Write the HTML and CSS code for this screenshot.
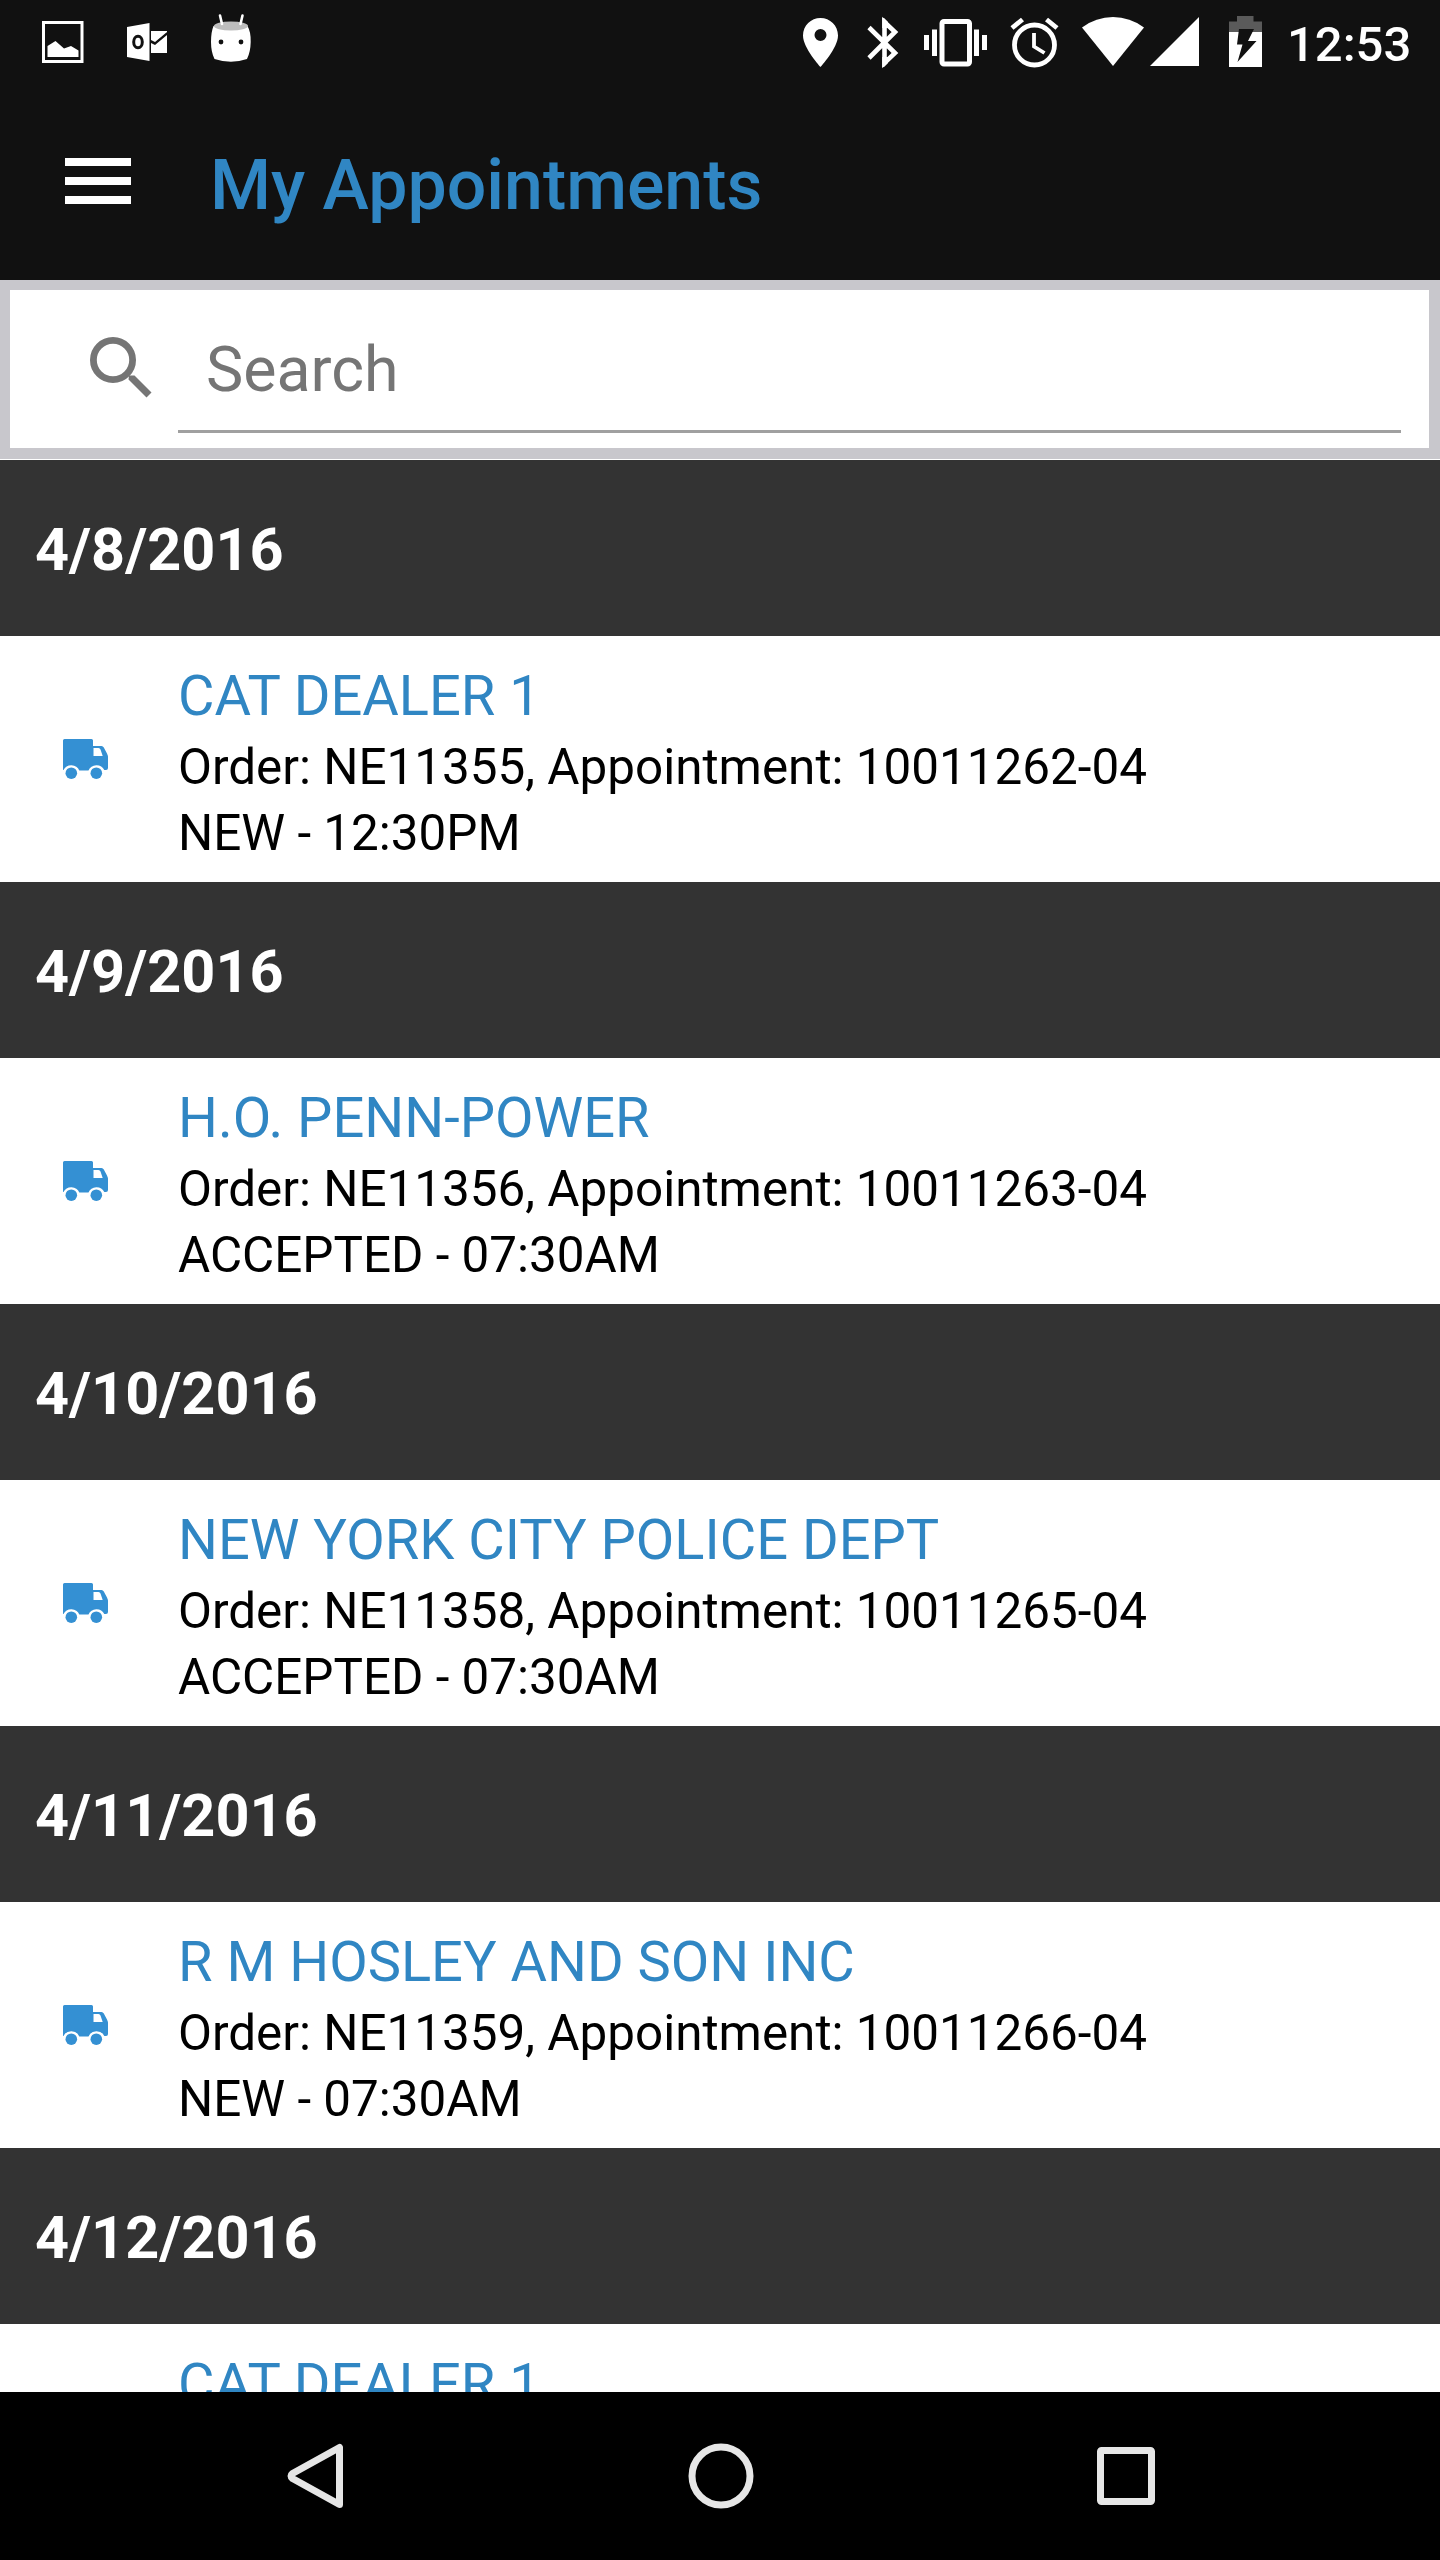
FILE: index.html
```
<!DOCTYPE html>
<html>

<head>
    <meta charset="utf-8">
    <title>My Appointments</title>
    <link rel="stylesheet" href="styles.css">
</head>

<body>
    <svg class="hidden">
        <symbol id="truck" viewBox="0 0 45 40">
            <path fill-rule="evenodd" d="M1.5 0H28.5Q30 0 30 1.500V7H38.500Q40 7 40.800 8.500L44 14.500Q45 16.500 45 18.500V29Q45 31 43 31H41.300A8.700 8.700 0 0 0 25.500 31.500H16.300A8.700 8.700 0 0 0 0.500 31L0 31V1.500Q0 0 1.500 0ZM30.500 9V17H39.700L37.500 10.500Q37 9 35.500 9Z"/>
            <circle cx="8.300" cy="34.200" r="5.800"/>
            <circle cx="33.300" cy="34.200" r="5.800"/>
        </symbol>
    </svg>

    <div class="screen">
        <div class="statusBar">
            <div class="notifications">
                <svg width="42" height="88" viewBox="42 0 42 88">
                    <rect x="43.500" y="22.500" width="38.500" height="39" fill="none" stroke="#fff" stroke-width="3"/>
                    <path d="M47.500 46L55.500 41L64 48.500L71 46L78.500 50.500V57H47.500Z"/>
                </svg>
                <svg width="42" height="88" viewBox="126 0 42 88">
                    <path d="M127 27L149.500 23V61L127 57Z"/>
                    <path d="M151 31H167V53H151V43L155 45L167 35V32L155 42L151 40Z"/>
                    <ellipse cx="138" cy="42" rx="4.300" ry="5.800" fill="none" stroke="#111" stroke-width="3"/>
                </svg>
                <svg width="42" height="88" viewBox="210 0 42 88">
                    <path d="M213.500 26Q231 20 247.500 26Q251 32 250.700 42Q250.500 52 247 59Q231 64.500 214.500 59Q211 52 211 42Q211 32 213.500 26Z"/>
                    <ellipse cx="231" cy="26" rx="17" ry="4.500" fill="#bdbdbd"/>
                    <path d="M220 15.500L222 24M242.500 15.500L240.500 24" stroke="#fff" stroke-width="2.600" stroke-linecap="round"/>
                    <circle cx="221" cy="42" r="2.400" fill="#111"/>
                    <circle cx="241" cy="42" r="2.400" fill="#111"/>
                </svg>
            </div>
            <div class="systemIcons">
                <svg width="36" height="88" viewBox="803 0 36 88">
                    <path fill-rule="evenodd" d="M820.500 18C811 18 803 25.500 803 35.500C803 48 820.500 67 820.500 67S838 48 838 35.500C838 25.500 830 18 820.500 18ZM820.500 29A6 6 0 1 1 820.500 41A6 6 0 0 1 820.500 29Z"/>
                </svg>
                <svg class="bluetooth" width="32" height="88" viewBox="867 0 32 88">
                    <path fill="none" stroke="#fff" stroke-width="4.600" d="M869 27.500L895 53L884.500 63V22L895 32L869 58"/>
                    <path d="M882.200 18H884L888 22V28H882.200ZM882.200 67H884L888 63V57H882.200Z"/>
                </svg>
                <svg class="vibrate" width="64" height="88" viewBox="924 0 64 88">
                    <rect x="942" y="21.500" width="27.500" height="42.500" rx="2" fill="none" stroke="#fff" stroke-width="5"/>
                    <path d="M924 35H929V50H924ZM932 29.500H937V56H932ZM974 29.500H979V56H974ZM982 35H987V50H982Z"/>
                </svg>
                <svg class="alarm" width="49" height="88" viewBox="1010 0 49 88">
                    <g fill="none" stroke="#fff">
                        <circle cx="1034.500" cy="45" r="20" stroke-width="4.800"/>
                        <path d="M1012 28L1022.500 19.500M1046.500 19.500L1057 28" stroke-width="4.800"/>
                        <path d="M1034 33V46.500L1044.500 53" stroke-width="3.800"/>
                    </g>
                </svg>
                <svg class="wifi" width="62" height="88" viewBox="1082 0 62 88">
                    <path d="M1113 66L1082 27.500Q1096 17 1113 17T1144 27.500Z"/>
                </svg>
                <svg class="signal" width="49" height="88" viewBox="1150 0 49 88">
                    <path d="M1150 66L1199 17V66Z"/>
                </svg>
                <svg class="battery" width="33" height="88" viewBox="1229 0 33 88">
                    <path fill="#5a5a5a" d="M1229 21.500H1237V16H1253.500V21.500H1262V32H1229Z"/>
                    <path d="M1229 32H1262V67H1229Z"/>
                    <path fill="#111" d="M1239 29H1254L1248 41H1256.500L1237.500 62L1242.500 44.500H1237Z"/>
                </svg>
                <span class="clock">12:53</span>
            </div>
        </div>

        <div class="header">
            <div class="menuButton">
                <span></span>
                <span></span>
                <span></span>
            </div>
            <div class="title">My Appointments</div>
        </div>

        <div class="searchBar">
            <svg class="searchIcon" width="62" height="62" viewBox="0 0 62 62">
                <circle cx="23" cy="23" r="19.600" fill="none" stroke="#757575" stroke-width="6.800"/>
                <path d="M39 38.500H44.500L61.500 55.500L56.500 60.500L38.500 42.500Z" fill="#757575"/>
            </svg>
            <div class="searchField">Search</div>
        </div>

        <div class="list">
            <div class="date">4/8/2016</div>
            <div class="appointment">
                <svg class="truck"><use href="#truck"/></svg>
                <div class="details">
                    <div class="name">CAT DEALER 1</div>
                    <div class="info">Order: NE11355, Appointment: 10011262-04</div>
                    <div class="info">NEW - 12:30PM</div>
                </div>
            </div>

            <div class="date">4/9/2016</div>
            <div class="appointment">
                <svg class="truck"><use href="#truck"/></svg>
                <div class="details">
                    <div class="name">H.O. PENN-POWER</div>
                    <div class="info">Order: NE11356, Appointment: 10011263-04</div>
                    <div class="info">ACCEPTED - 07:30AM</div>
                </div>
            </div>

            <div class="date">4/10/2016</div>
            <div class="appointment">
                <svg class="truck"><use href="#truck"/></svg>
                <div class="details">
                    <div class="name">NEW YORK CITY POLICE DEPT</div>
                    <div class="info">Order: NE11358, Appointment: 10011265-04</div>
                    <div class="info">ACCEPTED - 07:30AM</div>
                </div>
            </div>

            <div class="date">4/11/2016</div>
            <div class="appointment">
                <svg class="truck"><use href="#truck"/></svg>
                <div class="details">
                    <div class="name">R M HOSLEY AND SON INC</div>
                    <div class="info">Order: NE11359, Appointment: 10011266-04</div>
                    <div class="info">NEW - 07:30AM</div>
                </div>
            </div>

            <div class="date">4/12/2016</div>
            <div class="appointment">
                <div class="details lastDetails">
                    <div class="name">CAT DEALER 1</div>
                </div>
            </div>
        </div>

        <div class="navBar">
            <svg width="60" height="68" viewBox="0 0 60 68">
                <path d="M53.500 5.500V62.500L6.500 36.500Q3.500 34 6.500 31.500Z"/>
            </svg>
            <svg width="66" height="66" viewBox="0 0 66 66">
                <circle cx="33" cy="33" r="29"/>
            </svg>
            <svg width="60" height="60" viewBox="0 0 60 60">
                <rect x="4.500" y="4.500" width="51" height="51" rx="1"/>
            </svg>
        </div>
    </div>
</body>

</html>
```
FILE: styles.css
```
body {
    margin: 0;
    background-color: #000;
    font-family: Roboto, "Liberation Sans", sans-serif;
}

.hidden {
    display: none;
}

.screen {
    display: flex;
    flex-direction: column;
    width: 1440px;
    height: 2560px;
    overflow: hidden;
    background-color: #fff;
}

.statusBar {
    display: flex;
    justify-content: space-between;
    height: 88px;
    padding: 0 30px 0 42px;
    background-color: #111;
    color: #fff;
}

.statusBar svg {
    display: block;
    flex-shrink: 0;
    fill: #fff;
}

.notifications {
    display: flex;
    gap: 42px;
}

.systemIcons {
    display: flex;
    width: 607px;
}

.bluetooth {
    margin-left: 28px;
}

.vibrate {
    margin-left: 25px;
}

.alarm {
    margin-left: 22px;
}

.wifi {
    margin-left: 23px;
}

.signal {
    margin-left: 6px;
}

.battery {
    margin-left: 30px;
}

.clock {
    margin-left: 25px;
    font-size: 49px;
    font-weight: 500;
    line-height: 89px;
}

.header {
    display: flex;
    align-items: center;
    height: 192px;
    background-color: #111;
}

.menuButton {
    display: flex;
    flex-direction: column;
    gap: 11px;
    width: 66px;
    margin: 0 79px 7px 65px;
}

.menuButton span {
    height: 8px;
    background-color: #fff;
}

.title {
    margin-top: 2px;
    color: #3086c3;
    font-size: 69.8px;
    font-weight: 500;
    line-height: 82px;
}

.searchBar {
    display: flex;
    box-sizing: border-box;
    height: 179px;
    margin-bottom: 1px;
    border: 10px solid #c8c7cc;
    border-right-width: 11px;
    border-bottom-width: 11px;
}

.searchIcon {
    margin: 47px 26px 0 80px;
}

.searchField {
    flex: 1;
    height: 140px;
    margin-right: 28px;
    padding-left: 28px;
    border-bottom: 3px solid #a0a0a0;
    color: #757575;
    font-size: 62.7px;
    line-height: 159px;
}

.list {
    flex: 1;
    overflow: hidden;
}

.date {
    height: 176px;
    padding-left: 35px;
    background-color: #333;
    color: #fff;
    font-size: 59.4px;
    font-weight: 700;
    line-height: 180px;
}

.appointment {
    display: flex;
    height: 246px;
    background-color: #fff;
}

.truck {
    width: 45px;
    height: 40px;
    margin: 103px 70px 0 63px;
    fill: #3490d3;
}

.details {
    padding-top: 26px;
}

.lastDetails {
    margin-left: 178px;
}

.name {
    margin-bottom: 4px;
    color: #3086c3;
    font-size: 56px;
    line-height: 68px;
}

.info {
    color: #000;
    font-size: 49.4px;
    line-height: 66px;
}

.navBar {
    display: flex;
    align-items: center;
    justify-content: space-between;
    height: 168px;
    padding: 0 284px 0 286px;
    background-color: #000;
}

.navBar svg {
    fill: none;
    stroke: #e6e6e6;
    stroke-width: 7;
    stroke-linejoin: round;
}
```
